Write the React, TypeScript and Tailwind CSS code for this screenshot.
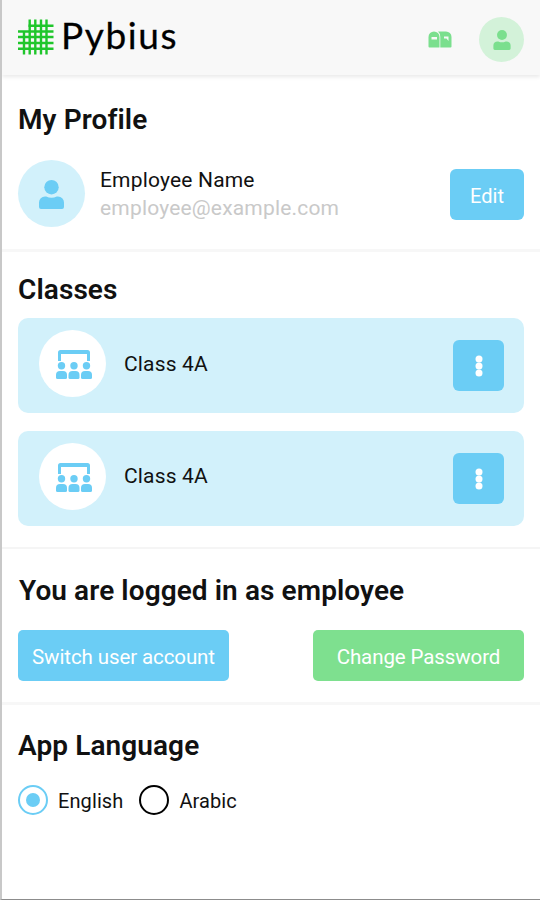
import { useState } from "react";

const LANGUAGES = ["English", "Arabic"];
const CLASSES = [
  { id: 1, name: "Class 4A" },
  { id: 2, name: "Class 4A" },
];

export default function App() {
  const [language, setLanguage] = useState("English");

  return (
    <div className="flex h-[900px] w-[540px] flex-col overflow-hidden border-b border-l-2 border-b-[#8c8c8c] border-l-[#c8c8c8] bg-white font-['Roboto',sans-serif] text-[#111]">
      <header className="flex h-[75px] shrink-0 items-center bg-[#f8f8f8] pt-1 pr-4 pl-4 shadow-[0_2px_4px_rgba(0,0,0,0.09)]">
        <Logo />
        <span className="-mt-[10px] ml-[7px] font-['Lato',sans-serif] text-[37px] leading-[48px] tracking-[1.6px] text-black [-webkit-text-stroke:0.3px_black]">
          Pybius
        </span>
        <MailboxIcon />
        <button className="ml-[27px] flex h-[45px] w-[45px] items-center justify-center rounded-full bg-[#d3f2d9]">
          <UserIcon className="h-5 w-[18px] text-[#7bdf8e]" />
        </button>
      </header>

      {/* Profile */}
      <section className="h-[177px] shrink-0 border-b-[3px] border-[#f7f7f7] px-4 pt-[27px]">
        <Heading>My Profile</Heading>
        <div className="mt-[22px] flex items-center">
          <div className="flex h-[67px] w-[67px] items-center justify-center rounded-full bg-[#d2f1fb]">
            <UserIcon className="mt-px h-[29px] w-[25px] text-[#6bcdf5]" />
          </div>
          <div className="ml-[15px] text-[21px] leading-7 tracking-[0.18px]">
            <p>Employee Name</p>
            <p className="text-[#c9c9c9]">employee@example.com</p>
          </div>
          <button className="mt-[2px] ml-auto h-[51px] w-[74px] rounded-md bg-[#6bcdf5] pt-[2px] text-[20px] text-white">
            Edit
          </button>
        </div>
      </section>

      {/* Classes */}
      <section className="h-[297px] shrink-0 border-b-2 border-[#f5f5f5] px-4 pt-[20px]">
        <Heading>Classes</Heading>
        <div className="mt-[10px] flex flex-col gap-[17.5px]">
          {CLASSES.map((item) => (
            <ClassCard key={item.id} name={item.name} />
          ))}
        </div>
      </section>

      {/* Account */}
      <section className="h-[156px] shrink-0 border-b-[3px] border-[#f7f7f7] px-4 pt-[24px]">
        <Heading className="pl-px">You are logged in as employee</Heading>
        <div className="mt-[21px] flex justify-between text-[20.5px] tracking-[-0.1px] text-white">
          <button className="h-[51px] w-[211px] rounded-[5px] bg-[#6bcdf5] pt-1">
            Switch user account
          </button>
          <button className="h-[51px] w-[211px] rounded-[5px] bg-[#7ee08f] pt-1">
            Change Password
          </button>
        </div>
      </section>

      {/* Language */}
      <section className="px-4 pt-[23px]">
        <Heading>App Language</Heading>
        <div className="mt-[20px] flex gap-4">
          {LANGUAGES.map((name) => (
            <button
              key={name}
              onClick={() => setLanguage(name)}
              className="flex items-center gap-[10px] text-[20px] tracking-[0.1px]"
            >
              <Radio checked={language === name} />
              <span className="pt-[2px]">{name}</span>
            </button>
          ))}
        </div>
      </section>
    </div>
  );
}

function Heading({
  children,
  className = "",
}: {
  children: React.ReactNode;
  className?: string;
}) {
  return (
    <h2 className={`text-[28px] leading-9 font-semibold tracking-[0.09px] ${className}`}>
      {children}
    </h2>
  );
}

function ClassCard({ name }: { name: string }) {
  return (
    <div className="flex h-[95px] items-center rounded-[10px] bg-[#d2f1fb] pr-5 pl-[21px]">
      <div className="-mt-1 flex h-[67px] w-[67px] items-center justify-center rounded-full bg-white">
        <ClassIcon />
      </div>
      <span className="-mt-[2px] ml-[18px] text-[21px] tracking-[0.15px]">{name}</span>
      <button className="ml-auto flex h-[51px] w-[51px] items-center justify-center rounded-md bg-[#6bcdf5]">
        <svg className="mt-px" width="8" height="22" viewBox="0 0 8 22" fill="white">
          <circle cx="4" cy="4" r="3.5" />
          <circle cx="4" cy="11" r="3.5" />
          <circle cx="4" cy="18" r="3.5" />
        </svg>
      </button>
    </div>
  );
}

function Radio({ checked }: { checked: boolean }) {
  return checked ? (
    <span className="flex h-[30px] w-[30px] items-center justify-center rounded-full border-2 border-[#6bcdf5]">
      <span className="h-[14px] w-[14px] rounded-full bg-[#6bcdf5]" />
    </span>
  ) : (
    <span className="h-[30px] w-[30px] rounded-full border-2 border-black" />
  );
}

function UserIcon({ className }: { className: string }) {
  return (
    <svg className={className} viewBox="0 0 25 29" fill="currentColor">
      <circle cx="12.5" cy="7.2" r="7.2" />
      <path d="M6 16.5h1.2a12 12 0 0 0 10.6 0H19a6 6 0 0 1 6 6V27a2 2 0 0 1-2 2H2a2 2 0 0 1-2-2v-4.500a6 6 0 0 1 6-6Z" />
    </svg>
  );
}

function MailboxIcon() {
  return (
    <svg className="ml-auto" width="24" height="17" viewBox="0 0 24 17">
      <path
        fill="#7bdf8e"
        d="M6 .5a5.500 5.500 0 0 1 5.500 5.500V16.500H1.500a1 1 0 0 1-1-1V6A5.500 5.500 0 0 1 6 .5Z M10 .5H18A5.500 5.500 0 0 1 23.500 6V15.500a1 1 0 0 1-1 1H12.300V6A6.500 6.500 0 0 0 10 .5Z"
      />
      <path d="M3.500 6h5.500v2.500h-5.500Z M16 5.500h4.500v4.500l-2-2.500h-2.500Z" fill="#f8f8f8" />
    </svg>
  );
}

function ClassIcon() {
  return (
    <svg className="mt-[2px] ml-[2px]" width="36" height="29" viewBox="0 0 36 29" fill="#6bcdf5">
      <path d="M2 2.500A2.500 2.500 0 0 1 4.500 0h27A2.500 2.500 0 0 1 34 2.500V11h-3V4H5v7H2Z" />
      <circle cx="5.500" cy="15.800" r="3.700" />
      <circle cx="18" cy="15.800" r="3.700" />
      <circle cx="30.500" cy="15.800" r="3.700" />
      <path d="M4 21h3a4 4 0 0 1 4 4v2.500a1.500 1.500 0 0 1-1.500 1.500h-8A1.500 1.500 0 0 1 0 27.500v-2.500a4 4 0 0 1 4-4Z" />
      <path d="M16.500 21h3a4 4 0 0 1 4 4v2.500a1.500 1.500 0 0 1-1.500 1.500h-8a1.500 1.500 0 0 1-1.500-1.500v-2.500a4 4 0 0 1 4-4Z" />
      <path d="M29 21h3a4 4 0 0 1 4 4v2.500a1.500 1.500 0 0 1-1.500 1.500h-8A1.500 1.500 0 0 1 25 27.500v-2.500a4 4 0 0 1 4-4Z" />
    </svg>
  );
}

function Logo() {
  return (
    <svg className="-mt-[5px]" width="36" height="36" viewBox="0 0 36 36" stroke="#1fc62b" strokeWidth="2.400">
      <path d="M10.500 6.700h25M0 12.500h35.500M0 18h35.500M0 24h35.500M0 29.700h35.500" />
      <path d="M6 12v23.500M11.700 .5v35M17.300 .5v35M23 .5v35M28.500 .5v35" />
    </svg>
  );
}
